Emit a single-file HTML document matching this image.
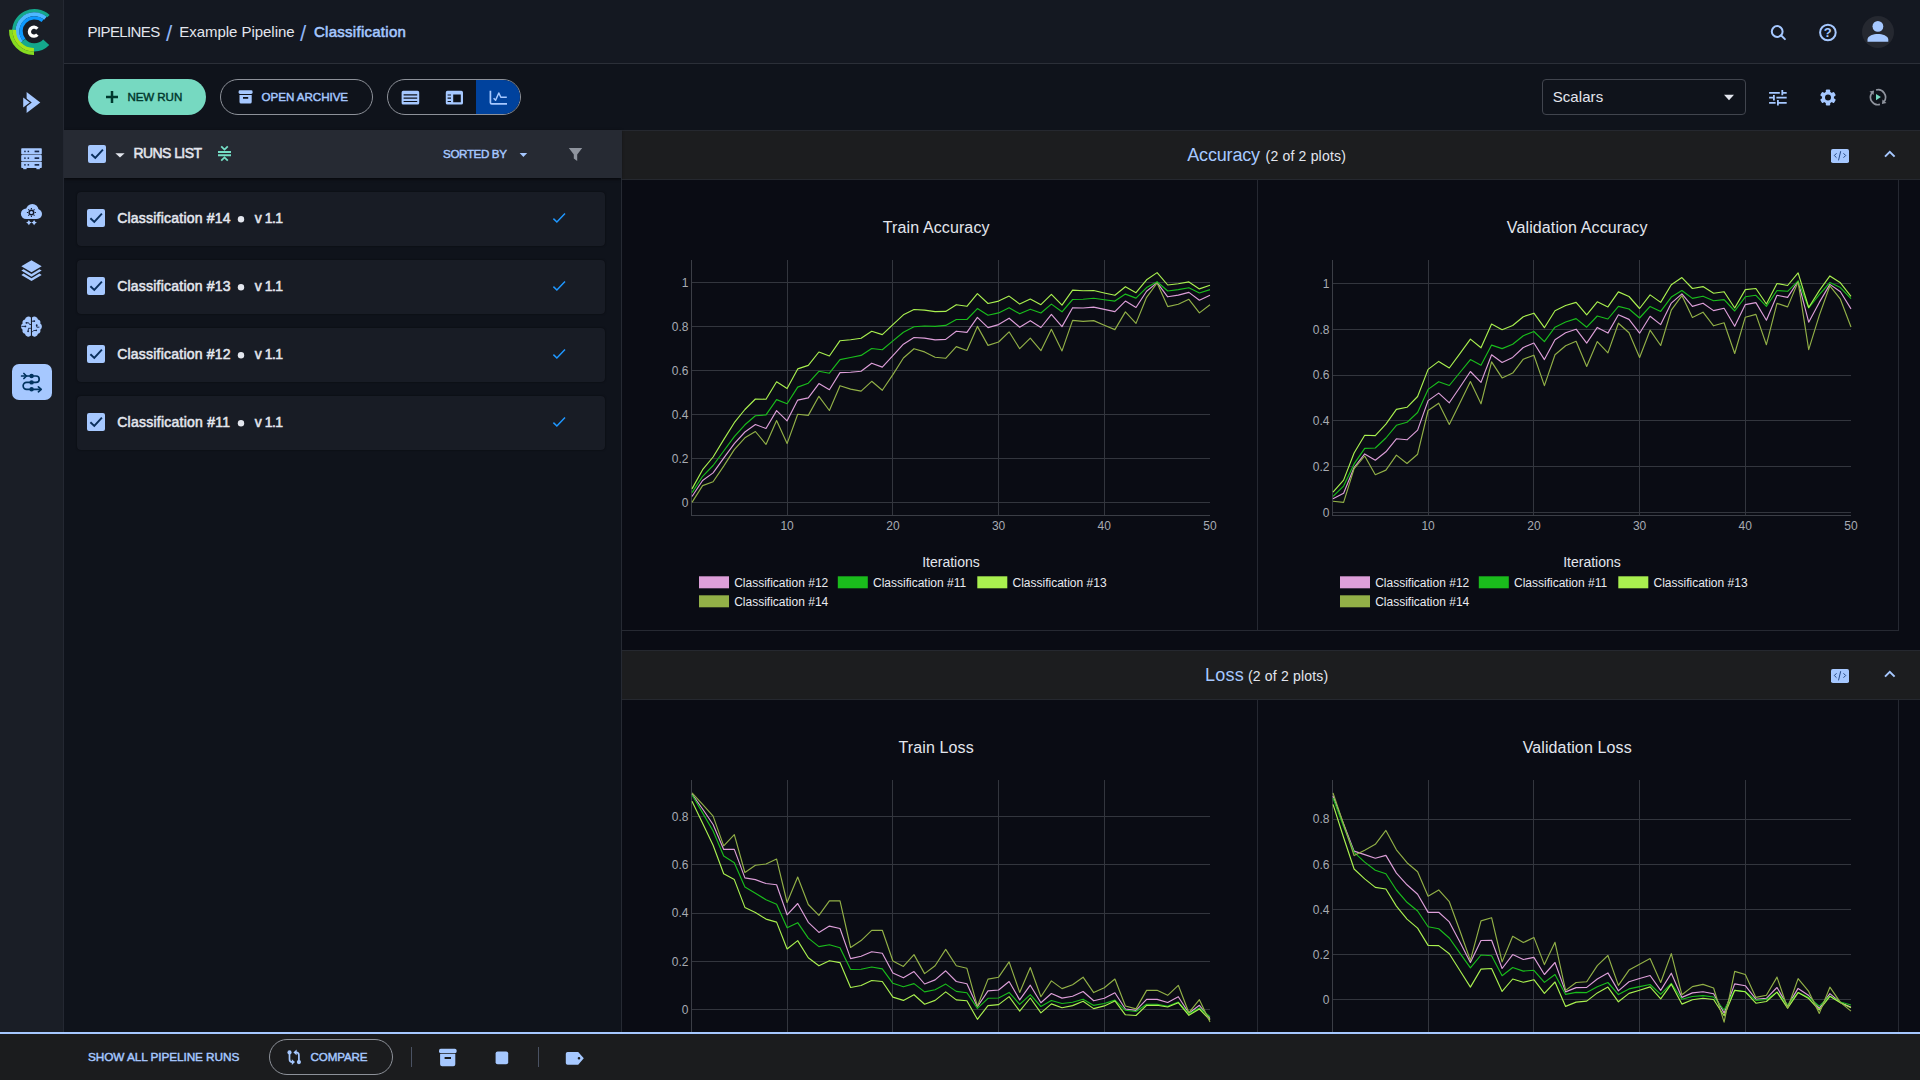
<!DOCTYPE html>
<html lang="en">
<head>
<meta charset="utf-8">
<title>Pipelines / Example Pipeline / Classification</title>
<style>
*{box-sizing:border-box;margin:0;padding:0}
html,body{width:1920px;height:1080px;overflow:hidden;background:#0f131b;color:#e3e6ee;font-family:"Liberation Sans",sans-serif;}
.t{position:absolute;white-space:pre;font-family:"Liberation Sans",sans-serif;}
.a{position:absolute}
#sidebar{position:absolute;left:0;top:0;width:64px;height:1032px;background:#1a1e26;border-right:1px solid #242832;}
#header{position:absolute;left:64px;top:0;width:1856px;height:64px;background:#141821;border-bottom:1px solid #2b2f38;}
#toolbar{position:absolute;left:64px;top:64px;width:1856px;height:66px;background:#0f131b;}
#listhead{position:absolute;left:64px;top:130px;width:557px;height:48px;background:#262a33;box-shadow:0 1px 3px rgba(0,0,0,.7);}
#list{position:absolute;left:64px;top:178px;width:557px;height:854px;background:#0f131b;}
#divider{position:absolute;left:621px;top:130px;width:1px;height:902px;background:#262a33;}
#right{position:absolute;left:622px;top:130px;width:1298px;height:902px;background:#0a0c14;overflow:hidden;}
#bottom{position:absolute;left:0;top:1032px;width:1920px;height:48px;background:#1b1c1e;border-top:2px solid #a6c8ff;}
.card{position:absolute;left:77px;width:528px;height:54px;background:#181c25;border-radius:4px;box-shadow:0 0 2px rgba(0,0,0,.6);}
.cb{position:absolute;width:18px;height:18px;background:#a6c8ff;border-radius:2px;}
.sechead{position:absolute;left:0;width:1298px;height:50px;background:#1c1d1f;border-top:1px solid #25282f;border-bottom:1px solid #25282f;}
.cell{position:absolute;border-right:1px solid #262932;border-bottom:1px solid #262932;}
.pill{position:absolute;height:36px;border-radius:18px;}
svg{position:absolute;overflow:visible}
svg text{font-family:"Liberation Sans",sans-serif}

</style>
</head>
<body>
<div id="header"></div>
<div id="toolbar"></div>
<div id="list"></div>
<div id="right">
  <div class="sechead" style="top:0"></div>
  <div class="cell" style="left:0;top:50px;width:636px;height:451px"></div>
  <div class="cell" style="left:636px;top:50px;width:641px;height:451px"></div>
  <div class="sechead" style="top:520px"></div>
  <div class="cell" style="left:0;top:570px;width:636px;height:451px"></div>
  <div class="cell" style="left:636px;top:570px;width:641px;height:451px"></div>
</div>
<div id="listhead"></div>
<div id="divider"></div>
<div class="card" style="top:192px"></div>
<div class="card" style="top:260px"></div>
<div class="card" style="top:328px"></div>
<div class="card" style="top:396px"></div>
<div id="sidebar"></div>
<div id="bottom"></div>
<!-- buttons -->
<div class="pill" style="left:88px;top:79px;width:118px;background:#76d9c1"></div>
<div class="pill" style="left:220px;top:79px;width:153px;border:1px solid #8d9199"></div>
<div class="pill" style="left:387px;top:79px;width:134px;border:1px solid #8d9199;overflow:hidden"><div class="a" style="left:88px;top:0;width:46px;height:36px;background:#00429d"></div></div>
<div class="a" style="left:1542px;top:79px;width:204px;height:36px;border:1px solid #41454e;border-radius:4px"></div>
<div class="pill" style="left:269px;top:1039px;width:124px;border:1px solid #8d9199"></div>
<div class="a" style="left:411px;top:1047px;width:1px;height:20px;background:#4a5263"></div>
<div class="a" style="left:538px;top:1047px;width:1px;height:20px;background:#4a5263"></div>
<div class="a" style="left:1862px;top:16px;width:32px;height:32px;border-radius:16px;background:#252830"></div>
<div class="a" style="left:12px;top:364px;width:40px;height:36px;border-radius:7px;background:#a6c8ff"></div>

<svg width="1920" height="1080" viewBox="0 0 1920 1080" style="left:0;top:0" fill="none">
<!-- logo -->
<g id="logo" fill="none" stroke-linecap="butt">
  <path d="M48.45 16.13 A20.6 20.6 0 0 0 13.88 33.00" stroke="#14a88c" stroke-width="3.4"/>
  <path d="M45.41 18.31 A16.95 16.95 0 0 0 21.61 42.32" stroke="#4db8ff" stroke-width="3.9"/>
  <path d="M42.65 20.64 A13.4 13.4 0 0 0 24.14 39.81" stroke="#0d99ff" stroke-width="3.3"/>
  <path d="M22.03 41.58 A16.15 16.15 0 0 0 46.21 42.21" stroke="#14a88c" stroke-width="8.3"/>
  <path d="M10.76 29.80 A22.85 22.85 0 0 0 34.00 53.25" stroke="#86dc20" stroke-width="3.5"/>
  <path d="M14.26 29.89 A19.35 19.35 0 0 0 33.94 49.75" stroke="#a4e41b" stroke-width="3.6"/>
  <path d="M37.35 28.81 A4.5 4.5 0 1 0 37.35 34.59" stroke="#ffffff" stroke-width="3.3"/>
</g>
<!-- sidebar icons -->
<g fill="#a6c8ff">
  <!-- 1 double arrow -->
  <path d="M26.6 92 L40.3 102.5 L26.6 113 Z" stroke="#1a1e26" stroke-width="0"/>
  <path d="M22.6 96.2 L30.8 102.5 L22.6 108.8 Z" stroke="#1a1e26" stroke-width="1.2"/>
  <!-- 2 server rack -->
  <rect x="21.2" y="148.2" width="20.6" height="6.2" rx="0.8"/>
  <rect x="21.2" y="155.0" width="20.6" height="6.2" rx="0.8" />
  <rect x="21.2" y="161.8" width="20.6" height="6.2" rx="0.8"/>
  <rect x="23.2" y="168" width="3.4" height="1.2"/><rect x="36.4" y="168" width="3.4" height="1.2"/>
  <g fill="#1a2a4a">
   <rect x="24.2" y="150.7" width="1.5" height="1.5"/><rect x="27.6" y="150.7" width="1.5" height="1.5"/><rect x="34.6" y="150.6" width="4.6" height="1.7"/>
   <rect x="24.2" y="157.4" width="1.5" height="1.5"/><rect x="27.6" y="157.4" width="1.5" height="1.5"/><rect x="34.6" y="157.3" width="4.6" height="1.7"/>
   <rect x="24.2" y="164.1" width="1.5" height="1.5"/><rect x="27.6" y="164.1" width="1.5" height="1.5"/><rect x="34.6" y="164.0" width="4.6" height="1.7"/>
  </g>
  <!-- 3 cloud gear -->
  <circle cx="26.1" cy="213.8" r="5.2"/><circle cx="32.3" cy="210.2" r="6.2"/><circle cx="37" cy="214" r="5"/><rect x="26" y="213" width="11" height="6"/>
  <circle cx="31.4" cy="212.5" r="2.3" fill="#a6c8ff" stroke="#10182a" stroke-width="1.4"/>
  <g stroke="#10182a" stroke-width="1.1"><path d="M31.4 208v1.2M31.4 215.8v1.2M26.9 212.5h1.2M34.7 212.5h1.2M28.3 209.4l.8.8M33.7 214.8l.8.8M34.5 209.4l-.8.8M29.1 214.8l-.8.8"/></g>
  <path d="M28.9 220 L30 221.7 L31.7 222.6 L30 223.5 L28.9 225.2 L27.8 223.5 L26.1 222.6 L27.8 221.7 Z"/>
  <path d="M34.1 220 L35.2 221.7 L36.9 222.6 L35.2 223.5 L34.1 225.2 L33 223.5 L31.3 222.6 L33 221.7 Z"/>
  <!-- 4 layers -->
  <path d="M31.5 260.3 L41.7 266.3 L31.5 272.3 L21.3 266.3 Z"/>
  <path d="M21.3 270.6 L23.6 269.2 L31.5 273.9 L39.4 269.2 L41.7 270.6 L31.5 276.7 Z"/>
  <path d="M21.3 275 L23.6 273.6 L31.5 278.3 L39.4 273.6 L41.7 275 L31.5 281.1 Z"/>
  <!-- 5 brain -->
  <path d="M30.9 317.6 A3.6 3.6 0 0 0 24.9 319.4 A3.3 3.3 0 0 0 22.6 323.4 A3.6 3.6 0 0 0 21.0 326.6 A3.6 3.6 0 0 0 22.6 329.8 A3.3 3.3 0 0 0 24.9 333.8 A3.6 3.6 0 0 0 30.9 335.6 Z"/>
  <path d="M32.0 317.6 A3.6 3.6 0 0 1 38.0 319.4 A3.3 3.3 0 0 1 40.3 323.4 A3.6 3.6 0 0 1 41.9 326.6 A3.6 3.6 0 0 1 40.3 329.8 A3.3 3.3 0 0 1 38.0 333.8 A3.6 3.6 0 0 1 32.0 335.6 Z"/>
  <g stroke="#15233f" stroke-width="0.9" fill="none"><path d="M26.6 322.8h2l1 1.7h1.6M21.4 326.4h4M30.9 328.3h-2.4l-.4 2.8M32 321.2h2M36.6 325.4l.2 1.8h2.6M32.2 332.2l1.4-1.7h2.6"/></g>
  <g fill="#15233f"><circle cx="26.4" cy="322.8" r="0.9"/><circle cx="25.4" cy="326.4" r="0.9"/><circle cx="28.1" cy="331.3" r="0.9"/><circle cx="34.3" cy="321.1" r="0.9"/><circle cx="36.7" cy="325.2" r="0.9"/><circle cx="36.3" cy="330.4" r="0.8"/></g>
</g>
<!-- 6 pipelines (active) -->
<g stroke="#00335f" stroke-width="1.7" fill="none" stroke-linecap="round" stroke-linejoin="round">
  <path d="M21.6 376 H36.0 A3.2 3.2 0 0 1 36.0 382.4 H26.6 A3.45 3.45 0 0 0 26.6 389.3 H40.6"/>
  <path d="M23.9 373.5 L26.4 376 L23.9 378.5"/>
  <path d="M38.4 386.8 L41.2 389.3 L38.4 391.8"/>
</g>
<g fill="#00335f"><circle cx="31.6" cy="376" r="2.2"/><circle cx="31.6" cy="382.4" r="2.2"/><circle cx="31.6" cy="389.3" r="2.2"/></g>

<!-- header right -->
<g stroke="#a6c8ff" stroke-width="2" fill="none">
  <circle cx="1777.2" cy="31.5" r="5.4"/>
  <path d="M1781.2 35.5 L1784.9 39.1" stroke-linecap="round"/>
  <circle cx="1827.9" cy="32.5" r="7.8"/>
</g>
<g fill="#a6c8ff">
  <circle cx="1877.9" cy="26.4" r="5.4"/>
  <path d="M1867.5 41.8 V39.6 C1867.5 35.6 1873.6 33.9 1877.9 33.9 C1882.2 33.9 1888.3 35.6 1888.3 39.6 V41.8 Z"/>
</g>
<!-- toolbar: plus -->
<path d="M112 91.1 V103.1 M106 97.1 H118" stroke="#00382d" stroke-width="2.5"/>
<!-- archive icon toolbar -->
<g fill="#a6c8ff">
  <rect x="238.6" y="90.3" width="14" height="3.6" rx="1.4"/>
  <path d="M239.5 94.9 H251.7 V102 A1.6 1.6 0 0 1 250.1 103.6 H241.1 A1.6 1.6 0 0 1 239.5 102 Z M243 97 V98.8 H248.2 V97 Z" fill-rule="evenodd"/>
</g>
<!-- view toggle icons -->
<g fill="#a6c8ff">
  <path fill-rule="evenodd" d="M403.2 90.8 H417.6 A1.6 1.6 0 0 1 419.2 92.4 V103 A1.6 1.6 0 0 1 417.6 104.6 H403.2 A1.6 1.6 0 0 1 401.6 103 V92.4 A1.6 1.6 0 0 1 403.2 90.8 Z M403.6 94.3 V95.5 H417.2 V94.3 Z M403.6 97.6 V98.8 H417.2 V97.6 Z M403.6 100.9 V102.1 H417.2 V100.9 Z"/>
  <path fill-rule="evenodd" d="M447.4 90.8 H461.4 A1.6 1.6 0 0 1 463 92.4 V103 A1.6 1.6 0 0 1 461.4 104.6 H447.4 A1.6 1.6 0 0 1 445.8 103 V92.4 A1.6 1.6 0 0 1 447.4 90.8 Z M453.2 94.4 V102.2 H460.8 V94.4 Z M447.6 94.4 V95.6 H451 V94.4 Z M447.6 97.6 V98.8 H451 V97.6 Z M447.6 100.9 V102.1 H451 V100.9 Z"/>
</g>
<g stroke="#a6c8ff" fill="none" stroke-width="1.7">
  <path d="M490.4 90.8 V102.4 A1.4 1.4 0 0 0 491.8 103.8 H507"/>
  <path d="M493.6 98.2 L495.6 100.2 L498.8 93 L500.8 97.2 H506.8" stroke-width="1.5" stroke-linejoin="round"/>
</g>
<!-- scalars arrow -->
<path d="M1724 94.8 H1734 L1729 100.2 Z" fill="#e3e6ee"/>
<!-- tune -->
<g stroke="#a6c8ff" stroke-width="1.8">
  <path d="M1769.1 92.8 H1779.8 M1782.2 92.8 H1786.7 M1769.1 97.7 H1773.9 M1776.4 97.7 H1786.7 M1769.1 102.8 H1775.6 M1777.9 102.8 H1786.7"/>
  <path d="M1782.3 89.9 V95.3 M1773.9 95.1 V100.4 M1777.9 100.1 V105.4"/>
</g>
<!-- gear -->
<g transform="translate(1828 97.5)">
  <g fill="#a6c8ff">
    <circle r="6.0"/>
    <rect x="-2.2" y="-7.9" width="4.4" height="15.8" rx="1"/>
    <rect x="-2.2" y="-7.9" width="4.4" height="15.8" rx="1" transform="rotate(60)"/>
    <rect x="-2.2" y="-7.9" width="4.4" height="15.8" rx="1" transform="rotate(120)"/>
  </g>
  <circle r="3.0" fill="#0f131b"/>
</g>
<!-- refresh/auto -->
<g stroke="#8f949e" stroke-width="1.7" fill="none">
  <path d="M1876.06 89.96 A7.5 7.5 0 0 1 1884.14 101.50"/>
  <path d="M1879.94 104.44 A7.5 7.5 0 0 1 1871.86 92.90"/>
</g>
<path d="M1881.95 104.02 L1886.48 103.02 L1882.47 99.41 Z" fill="#8f949e"/>
<path d="M1874.05 90.38 L1869.52 91.38 L1873.53 94.99 Z" fill="#8f949e"/>
<path d="M1876 94 L1880.9 97.1 L1876 100.2 Z" fill="#76d9c1"/>

<!-- list header -->
<rect x="88" y="145" width="18" height="18" rx="2" fill="#a6c8ff"/>
<path d="M91.4 154.2 L95.3 158.0 L102.9 149.6" stroke="#0a2f5c" stroke-width="1.9" fill="none"/>
<path d="M115.4 153.2 H124.6 L120 157.6 Z" fill="#e3e6ee"/>
<g stroke="#76dfc7" fill="none">
  <path d="M218 152 H231 M218 155.3 H231" stroke-width="2.1"/>
  <path d="M221.2 146.4 L224.5 149.6 L227.8 146.4 M221.2 160.6 L224.5 157.4 L227.8 160.6" stroke-width="1.8"/>
</g>
<path d="M519.6 152.9 H527.2 L523.4 157 Z" fill="#a6c8ff"/>
<path d="M568.8 147.9 H582.2 L577.2 154.6 V161 L573.8 158.6 V154.6 Z" fill="#8f949e"/>

<!-- card checkboxes / marks -->
<g id="cards">
  <g transform="translate(0 0)">
    <rect x="87" y="209" width="18" height="18" rx="2" fill="#a6c8ff"/>
    <path d="M90.4 218.2 L94.3 222.0 L101.9 213.6" stroke="#0a2f5c" stroke-width="1.9" fill="none"/>
    <circle cx="241" cy="219.2" r="3.2" fill="#e3e6ee"/>
    <path d="M553.4 218.6 L556.9 222.0 L565.0 213.6" stroke="#1f97ff" stroke-width="1.5" fill="none"/>
  </g>
  <g transform="translate(0 68)">
    <rect x="87" y="209" width="18" height="18" rx="2" fill="#a6c8ff"/>
    <path d="M90.4 218.2 L94.3 222.0 L101.9 213.6" stroke="#0a2f5c" stroke-width="1.9" fill="none"/>
    <circle cx="241" cy="219.2" r="3.2" fill="#e3e6ee"/>
    <path d="M553.4 218.6 L556.9 222.0 L565.0 213.6" stroke="#1f97ff" stroke-width="1.5" fill="none"/>
  </g>
  <g transform="translate(0 136)">
    <rect x="87" y="209" width="18" height="18" rx="2" fill="#a6c8ff"/>
    <path d="M90.4 218.2 L94.3 222.0 L101.9 213.6" stroke="#0a2f5c" stroke-width="1.9" fill="none"/>
    <circle cx="241" cy="219.2" r="3.2" fill="#e3e6ee"/>
    <path d="M553.4 218.6 L556.9 222.0 L565.0 213.6" stroke="#1f97ff" stroke-width="1.5" fill="none"/>
  </g>
  <g transform="translate(0 204)">
    <rect x="87" y="209" width="18" height="18" rx="2" fill="#a6c8ff"/>
    <path d="M90.4 218.2 L94.3 222.0 L101.9 213.6" stroke="#0a2f5c" stroke-width="1.9" fill="none"/>
    <circle cx="241" cy="219.2" r="3.2" fill="#e3e6ee"/>
    <path d="M553.4 218.6 L556.9 222.0 L565.0 213.6" stroke="#1f97ff" stroke-width="1.5" fill="none"/>
  </g>
</g>
<!-- section header icons -->
<g id="sec1">
  <rect x="1831" y="149" width="18" height="14" rx="1.8" fill="#a6c8ff"/>
  <path d="M1836.5 153.3 L1834.3 155.5 L1836.5 157.7 M1843.5 153.3 L1845.7 155.5 L1843.5 157.7 M1840.7 151.2 L1838.5 160.4" stroke="#1c3f7c" stroke-width="0.95" fill="none"/>
  <path d="M1885 156.6 L1889.8 151.8 L1894.6 156.6" stroke="#a6c8ff" stroke-width="2" fill="none"/>
</g>
<g id="sec2" transform="translate(0 520)">
  <rect x="1831" y="149" width="18" height="14" rx="1.8" fill="#a6c8ff"/>
  <path d="M1836.5 153.3 L1834.3 155.5 L1836.5 157.7 M1843.5 153.3 L1845.7 155.5 L1843.5 157.7 M1840.7 151.2 L1838.5 160.4" stroke="#1c3f7c" stroke-width="0.95" fill="none"/>
  <path d="M1885 156.6 L1889.8 151.8 L1894.6 156.6" stroke="#a6c8ff" stroke-width="2" fill="none"/>
</g>
<!-- bottom bar icons -->
<g stroke="#a6c8ff" stroke-width="1.7" fill="none">
  <path d="M289.5 1052.4 V1059.2 A2.9 2.9 0 0 0 292.4 1062.1 H293"/>
  <path d="M298.9 1062.1 V1055.3 A2.9 2.9 0 0 0 296 1052.4 H295.4"/>
</g>
<g fill="#a6c8ff">
  <circle cx="289.5" cy="1052.4" r="2.1"/><circle cx="298.9" cy="1062.1" r="2.1"/>
  <path d="M291.8 1059.3 L295 1062.1 L291.8 1064.9 Z"/>
  <path d="M296.6 1049.6 L293.4 1052.4 L296.6 1055.2 Z"/>
  <rect x="439" y="1048.8" width="17.6" height="4.4" rx="1.7"/>
  <path fill-rule="evenodd" d="M440.1 1054.1 H455.3 V1064.3 A2 2 0 0 1 453.3 1066.3 H442.1 A2 2 0 0 1 440.1 1064.3 Z M444.6 1056.9 V1059.1 H451 V1056.9 Z"/>
  <rect x="495.6" y="1051.4" width="12.6" height="12.8" rx="2"/>
  <path fill-rule="evenodd" d="M567.6 1051.9 H578.2 L583.8 1058.3 L578.2 1064.7 H567.6 A1.8 1.8 0 0 1 565.8 1062.9 V1053.7 A1.8 1.8 0 0 1 567.6 1051.9 Z M579 1057.0 A1.3 1.3 0 1 0 579 1059.6 A1.3 1.3 0 1 0 579 1057.0 Z"/>
</g>
</svg>
<div class="t" style="left:1823.7px;top:26px;font-size:13px;line-height:13px;font-weight:bold;color:#a6c8ff">?</div>

<svg width="1920" height="1032" viewBox="0 0 1920 1032" style="left:0;top:0;overflow:hidden" fill="none" shape-rendering="auto">
<g stroke="#33363e" stroke-width="1" shape-rendering="crispEdges">
<path d="M787.5 260 V515"/>
<path d="M892.5 260 V515"/>
<path d="M998.5 260 V515"/>
<path d="M1104.5 260 V515"/>
<path d="M692 502.5 H1210"/>
<path d="M692 458.5 H1210"/>
<path d="M692 414.5 H1210"/>
<path d="M692 370.5 H1210"/>
<path d="M692 326.5 H1210"/>
<path d="M692 282.5 H1210"/>
</g>
<g stroke="#3b3e46" stroke-width="1" shape-rendering="crispEdges"><path d="M691.5 260 V515.5"/><path d="M691 515.5 H1210"/></g>
<polyline points="692.0,496.5 702.6,480.5 713.1,472.9 723.7,458.2 734.3,443.6 744.9,432.0 755.4,424.5 766.0,428.5 776.6,410.6 787.1,420.8 797.7,400.1 808.3,397.9 818.9,383.6 829.4,389.7 840.0,372.6 850.6,372.2 861.1,371.3 871.7,363.2 882.3,367.1 892.9,355.6 903.4,344.2 914.0,337.5 924.6,338.1 935.1,339.9 945.7,339.4 956.3,331.2 966.9,332.4 977.4,317.4 988.0,327.6 998.6,324.6 1009.1,318.2 1019.7,327.2 1030.3,320.7 1040.9,327.5 1051.4,314.4 1062.0,326.6 1072.6,307.7 1083.1,308.0 1093.7,307.1 1104.3,309.4 1114.9,311.6 1125.4,301.1 1136.0,307.5 1146.6,291.3 1157.1,282.6 1167.7,296.8 1178.3,295.1 1188.9,292.4 1199.4,300.2 1210.0,295.2" stroke="#dd9fd9" stroke-width="1.15" stroke-linejoin="round" fill="none"/>
<polyline points="692.0,492.6 702.6,476.3 713.1,465.5 723.7,451.0 734.3,436.6 744.9,424.8 755.4,415.8 766.0,414.9 776.6,399.6 787.1,403.7 797.7,387.1 808.3,383.2 818.9,371.3 829.4,373.2 840.0,359.6 850.6,357.5 861.1,355.4 871.7,348.5 882.3,349.7 892.9,340.9 903.4,332.2 914.0,326.8 924.6,326.0 935.1,326.4 945.7,325.4 956.3,319.5 966.9,319.5 977.4,308.6 988.0,315.2 998.6,312.9 1009.1,307.7 1019.7,313.8 1030.3,309.2 1040.9,313.0 1051.4,304.1 1062.0,311.8 1072.6,299.5 1083.1,299.2 1093.7,298.3 1104.3,299.8 1114.9,301.1 1125.4,294.1 1136.0,298.1 1146.6,287.6 1157.1,281.7 1167.7,291.0 1178.3,289.6 1188.9,287.7 1199.4,293.0 1210.0,289.6" stroke="#1abc1c" stroke-width="1.15" stroke-linejoin="round" fill="none"/>
<polyline points="692.0,488.9 702.6,469.7 713.1,457.0 723.7,439.6 734.3,422.7 744.9,409.5 755.4,399.0 766.0,399.3 776.6,381.8 787.1,388.6 797.7,368.9 808.3,365.4 818.9,352.0 829.4,356.0 840.0,340.7 850.6,339.7 861.1,338.3 871.7,331.3 882.3,334.6 892.9,324.7 903.4,314.8 914.0,309.5 924.6,310.1 935.1,311.6 945.7,311.4 956.3,304.7 966.9,306.3 977.4,293.6 988.0,303.5 998.6,301.1 1009.1,296.1 1019.7,304.1 1030.3,299.0 1040.9,304.7 1051.4,294.4 1062.0,305.2 1072.6,290.1 1083.1,290.8 1093.7,290.5 1104.3,293.0 1114.9,295.3 1125.4,286.7 1136.0,292.7 1146.6,279.8 1157.1,272.6 1167.7,285.0 1178.3,283.8 1188.9,281.9 1199.4,288.9 1210.0,285.2" stroke="#a9f04f" stroke-width="1.15" stroke-linejoin="round" fill="none"/>
<polyline points="692.0,502.4 702.6,485.6 713.1,481.7 723.7,466.1 734.3,449.6 744.9,437.8 755.4,431.5 766.0,444.4 776.6,420.6 787.1,443.6 797.7,414.3 808.3,415.4 818.9,396.3 829.4,410.5 840.0,385.7 850.6,389.1 861.1,391.1 871.7,381.3 882.3,390.3 892.9,374.6 903.4,358.0 914.0,348.7 924.6,351.9 935.1,357.3 945.7,358.3 956.3,346.6 966.9,350.5 977.4,326.4 988.0,345.4 998.6,342.0 1009.1,331.8 1019.7,348.7 1030.3,338.2 1040.9,350.7 1051.4,329.3 1062.0,350.9 1072.6,320.4 1083.1,321.4 1093.7,320.6 1104.3,325.2 1114.9,329.6 1125.4,311.9 1136.0,323.4 1146.6,297.3 1157.1,283.0 1167.7,306.6 1178.3,304.3 1188.9,299.3 1199.4,312.9 1210.0,304.8" stroke="#92b047" stroke-width="1.15" stroke-linejoin="round" fill="none"/>
<g fill="#a7abb3" font-size="12">
<text x="688.4" y="506.8" text-anchor="end">0</text>
<text x="688.4" y="462.8" text-anchor="end">0.2</text>
<text x="688.4" y="418.8" text-anchor="end">0.4</text>
<text x="688.4" y="374.8" text-anchor="end">0.6</text>
<text x="688.4" y="330.8" text-anchor="end">0.8</text>
<text x="688.4" y="286.8" text-anchor="end">1</text>
<text x="787.1" y="530" text-anchor="middle">10</text>
<text x="892.9" y="530" text-anchor="middle">20</text>
<text x="998.6" y="530" text-anchor="middle">30</text>
<text x="1104.3" y="530" text-anchor="middle">40</text>
<text x="1210.0" y="530" text-anchor="middle">50</text>
</g>
<text x="936.2" y="233.3" text-anchor="middle" font-size="16" letter-spacing="0.12" fill="#e3e6ee">Train Accuracy</text>
<g stroke="#33363e" stroke-width="1" shape-rendering="crispEdges">
<path d="M1428.5 260 V515"/>
<path d="M1533.5 260 V515"/>
<path d="M1639.5 260 V515"/>
<path d="M1745.5 260 V515"/>
<path d="M1333 512.5 H1851"/>
<path d="M1333 466.5 H1851"/>
<path d="M1333 420.5 H1851"/>
<path d="M1333 375.5 H1851"/>
<path d="M1333 329.5 H1851"/>
<path d="M1333 283.5 H1851"/>
</g>
<g stroke="#3b3e46" stroke-width="1" shape-rendering="crispEdges"><path d="M1332.5 260 V515.5"/><path d="M1332 515.5 H1851"/></g>
<polyline points="1333.0,498.8 1343.6,493.3 1354.1,467.5 1364.7,453.9 1375.3,460.2 1385.9,451.8 1396.4,438.8 1407.0,439.8 1417.6,430.1 1428.1,400.6 1438.7,393.1 1449.3,402.8 1459.9,387.3 1470.4,371.5 1481.0,382.4 1491.6,354.8 1502.1,362.5 1512.7,357.4 1523.3,347.5 1533.9,343.0 1544.4,359.6 1555.0,339.7 1565.6,332.8 1576.1,329.2 1586.7,343.1 1597.3,327.4 1607.9,333.1 1618.4,314.8 1629.0,319.4 1639.6,333.2 1650.1,316.3 1660.7,324.6 1671.3,303.1 1681.9,293.9 1692.4,306.4 1703.0,303.2 1713.6,310.6 1724.1,308.3 1734.7,326.3 1745.3,304.6 1755.9,302.6 1766.4,320.2 1777.0,295.3 1787.6,297.4 1798.1,281.3 1808.7,322.2 1819.3,302.4 1829.9,284.4 1840.4,291.8 1851.0,308.9" stroke="#dd9fd9" stroke-width="1.15" stroke-linejoin="round" fill="none"/>
<polyline points="1333.0,496.4 1343.6,486.1 1354.1,463.9 1364.7,448.4 1375.3,448.0 1385.9,438.0 1396.4,425.3 1407.0,422.3 1417.6,412.5 1428.1,389.4 1438.7,381.7 1449.3,385.5 1459.9,372.5 1470.4,359.6 1481.0,365.2 1491.6,345.1 1502.1,348.6 1512.7,344.2 1523.3,335.7 1533.9,331.5 1544.4,341.6 1555.0,327.2 1565.6,322.0 1576.1,318.6 1586.7,327.2 1597.3,316.0 1607.9,319.0 1618.4,306.4 1629.0,309.0 1639.6,318.0 1650.1,306.4 1660.7,311.4 1671.3,297.1 1681.9,290.5 1692.4,298.4 1703.0,296.2 1713.6,300.8 1724.1,299.6 1734.7,311.0 1745.3,296.8 1755.9,295.3 1766.4,306.4 1777.0,290.5 1787.6,291.3 1798.1,280.8 1808.7,308.0 1819.3,294.6 1829.9,282.5 1840.4,287.6 1851.0,298.7" stroke="#1abc1c" stroke-width="1.15" stroke-linejoin="round" fill="none"/>
<polyline points="1333.0,492.1 1343.6,480.1 1354.1,453.0 1364.7,435.3 1375.3,435.6 1385.9,424.1 1396.4,409.4 1407.0,407.3 1417.6,396.5 1428.1,369.4 1438.7,361.4 1449.3,368.0 1459.9,353.6 1470.4,339.1 1481.0,347.8 1491.6,324.1 1502.1,329.7 1512.7,325.5 1523.3,316.7 1533.9,313.2 1544.4,327.7 1555.0,310.8 1565.6,305.5 1576.1,302.4 1586.7,314.8 1597.3,301.8 1607.9,306.9 1618.4,291.9 1629.0,296.5 1639.6,308.5 1650.1,294.9 1660.7,302.4 1671.3,284.8 1681.9,277.6 1692.4,288.5 1703.0,286.6 1713.6,293.2 1724.1,291.7 1734.7,308.0 1745.3,289.6 1755.9,288.5 1766.4,304.0 1777.0,283.5 1787.6,285.5 1798.1,272.9 1808.7,307.5 1819.3,290.6 1829.9,275.9 1840.4,282.8 1851.0,296.4" stroke="#a9f04f" stroke-width="1.15" stroke-linejoin="round" fill="none"/>
<polyline points="1333.0,501.2 1343.6,502.4 1354.1,468.7 1364.7,456.0 1375.3,474.7 1385.9,470.1 1396.4,455.1 1407.0,463.5 1417.6,454.2 1428.1,410.5 1438.7,403.2 1449.3,424.5 1459.9,402.9 1470.4,381.5 1481.0,403.8 1491.6,361.9 1502.1,377.9 1512.7,373.1 1523.3,359.2 1533.9,355.2 1544.4,385.6 1555.0,354.7 1565.6,345.7 1576.1,341.3 1586.7,366.5 1597.3,341.6 1607.9,352.9 1618.4,323.2 1629.0,332.8 1639.6,357.5 1650.1,330.2 1660.7,345.5 1671.3,310.1 1681.9,295.6 1692.4,317.4 1703.0,312.2 1713.6,325.8 1724.1,322.8 1734.7,353.5 1745.3,317.2 1755.9,314.4 1766.4,344.7 1777.0,303.4 1787.6,306.9 1798.1,281.9 1808.7,349.7 1819.3,315.4 1829.9,285.8 1840.4,299.2 1851.0,327.0" stroke="#92b047" stroke-width="1.15" stroke-linejoin="round" fill="none"/>
<g fill="#a7abb3" font-size="12">
<text x="1329.4" y="516.7" text-anchor="end">0</text>
<text x="1329.4" y="470.9" text-anchor="end">0.2</text>
<text x="1329.4" y="425.1" text-anchor="end">0.4</text>
<text x="1329.4" y="379.3" text-anchor="end">0.6</text>
<text x="1329.4" y="333.5" text-anchor="end">0.8</text>
<text x="1329.4" y="287.7" text-anchor="end">1</text>
<text x="1428.1" y="530" text-anchor="middle">10</text>
<text x="1533.9" y="530" text-anchor="middle">20</text>
<text x="1639.6" y="530" text-anchor="middle">30</text>
<text x="1745.3" y="530" text-anchor="middle">40</text>
<text x="1851.0" y="530" text-anchor="middle">50</text>
</g>
<text x="1577.2" y="233.3" text-anchor="middle" font-size="16" letter-spacing="0.12" fill="#e3e6ee">Validation Accuracy</text>
<g stroke="#33363e" stroke-width="1" shape-rendering="crispEdges">
<path d="M787.5 780 V1035"/>
<path d="M892.5 780 V1035"/>
<path d="M998.5 780 V1035"/>
<path d="M1104.5 780 V1035"/>
<path d="M692 1009.5 H1210"/>
<path d="M692 961.5 H1210"/>
<path d="M692 913.5 H1210"/>
<path d="M692 864.5 H1210"/>
<path d="M692 816.5 H1210"/>
</g>
<g stroke="#3b3e46" stroke-width="1" shape-rendering="crispEdges"><path d="M691.5 780 V1035.5"/><path d="M691 1035.5 H1210"/></g>
<polyline points="692.0,794.1 702.6,809.0 713.1,824.5 723.7,849.4 734.3,849.4 744.9,877.9 755.4,879.6 766.0,883.5 776.6,884.8 787.1,914.8 797.7,903.5 808.3,922.3 818.9,932.4 829.4,926.1 840.0,928.5 850.6,958.6 861.1,956.2 871.7,951.8 882.3,953.2 892.9,973.1 903.4,977.8 914.0,971.6 924.6,984.0 935.1,979.9 945.7,970.8 956.3,981.5 966.9,983.7 977.4,1006.7 988.0,990.9 998.6,990.0 1009.1,981.5 1019.7,999.9 1030.3,985.2 1040.9,1002.8 1051.4,993.5 1062.0,998.1 1072.6,996.2 1083.1,991.5 1093.7,1000.8 1104.3,998.2 1114.9,992.8 1125.4,1009.0 1136.0,1010.4 1146.6,999.4 1157.1,999.4 1167.7,1002.5 1178.3,996.7 1188.9,1013.3 1199.4,1005.3 1210.0,1018.7" stroke="#dd9fd9" stroke-width="1.15" stroke-linejoin="round" fill="none"/>
<polyline points="692.0,794.7 702.6,812.9 713.1,831.0 723.7,856.0 734.3,862.7 744.9,887.0 755.4,893.2 766.0,899.7 776.6,904.2 787.1,927.7 797.7,922.7 808.3,938.1 818.9,946.6 829.4,944.8 840.0,947.8 850.6,969.5 861.1,969.2 871.7,967.0 882.3,968.9 892.9,983.3 903.4,986.8 914.0,983.6 924.6,991.9 935.1,989.7 945.7,984.1 956.3,991.4 966.9,992.8 977.4,1008.4 988.0,998.3 998.6,998.0 1009.1,992.4 1019.7,1004.4 1030.3,994.6 1040.9,1006.5 1051.4,1000.5 1062.0,1003.5 1072.6,1002.2 1083.1,999.2 1093.7,1005.4 1104.3,1003.5 1114.9,1000.1 1125.4,1010.3 1136.0,1011.5 1146.6,1004.2 1157.1,1004.2 1167.7,1006.3 1178.3,1002.1 1188.9,1013.9 1199.4,1007.9 1210.0,1016.7" stroke="#1abc1c" stroke-width="1.15" stroke-linejoin="round" fill="none"/>
<polyline points="692.0,801.2 702.6,823.2 713.1,845.2 723.7,873.8 734.3,879.6 744.9,907.4 755.4,912.6 766.0,919.1 776.6,922.1 787.1,949.0 797.7,940.6 808.3,957.8 818.9,965.8 829.4,960.7 840.0,962.6 850.6,987.5 861.1,985.5 871.7,980.5 882.3,981.5 892.9,997.1 903.4,1000.4 914.0,994.7 924.6,1004.2 935.1,1000.4 945.7,991.9 956.3,999.9 966.9,1000.7 977.4,1019.3 988.0,1005.6 998.6,1004.6 1009.1,996.6 1019.7,1011.2 1030.3,998.0 1040.9,1012.9 1051.4,1003.9 1062.0,1007.7 1072.6,1005.6 1083.1,1001.2 1093.7,1008.6 1104.3,1005.9 1114.9,1000.9 1125.4,1014.8 1136.0,1015.5 1146.6,1005.3 1157.1,1005.3 1167.7,1007.0 1178.3,1002.7 1188.9,1015.3 1199.4,1009.0 1210.0,1020.0" stroke="#a9f04f" stroke-width="1.15" stroke-linejoin="round" fill="none"/>
<polyline points="692.0,792.8 702.6,804.4 713.1,816.1 723.7,845.9 734.3,834.6 744.9,872.5 755.4,865.3 766.0,864.0 776.6,859.1 787.1,902.5 797.7,877.0 808.3,904.5 818.9,915.3 829.4,900.8 840.0,900.8 850.6,947.5 861.1,940.6 871.7,930.3 882.3,930.3 892.9,961.0 903.4,966.4 914.0,954.6 924.6,973.6 935.1,965.7 945.7,949.4 956.3,965.7 966.9,968.3 977.4,1006.3 988.0,979.1 998.6,977.2 1009.1,961.9 1019.7,992.4 1030.3,967.5 1040.9,996.7 1051.4,980.9 1062.0,988.6 1072.6,984.7 1083.1,977.2 1093.7,992.6 1104.3,987.7 1114.9,979.0 1125.4,1006.0 1136.0,1008.9 1146.6,990.4 1157.1,990.3 1167.7,995.3 1178.3,985.3 1188.9,1012.7 1199.4,999.7 1210.0,1022.0" stroke="#92b047" stroke-width="1.15" stroke-linejoin="round" fill="none"/>
<g fill="#a7abb3" font-size="12">
<text x="688.4" y="1013.8" text-anchor="end">0</text>
<text x="688.4" y="965.6" text-anchor="end">0.2</text>
<text x="688.4" y="917.4" text-anchor="end">0.4</text>
<text x="688.4" y="869.2" text-anchor="end">0.6</text>
<text x="688.4" y="821.0" text-anchor="end">0.8</text>
<text x="787.1" y="1050" text-anchor="middle">10</text>
<text x="892.9" y="1050" text-anchor="middle">20</text>
<text x="998.6" y="1050" text-anchor="middle">30</text>
<text x="1104.3" y="1050" text-anchor="middle">40</text>
<text x="1210.0" y="1050" text-anchor="middle">50</text>
</g>
<text x="936.2" y="753.3" text-anchor="middle" font-size="16" letter-spacing="0.12" fill="#e3e6ee">Train Loss</text>
<g stroke="#33363e" stroke-width="1" shape-rendering="crispEdges">
<path d="M1428.5 780 V1035"/>
<path d="M1533.5 780 V1035"/>
<path d="M1639.5 780 V1035"/>
<path d="M1745.5 780 V1035"/>
<path d="M1333 999.5 H1851"/>
<path d="M1333 954.5 H1851"/>
<path d="M1333 909.5 H1851"/>
<path d="M1333 864.5 H1851"/>
<path d="M1333 819.5 H1851"/>
</g>
<g stroke="#3b3e46" stroke-width="1" shape-rendering="crispEdges"><path d="M1332.5 780 V1035.5"/><path d="M1332 1035.5 H1851"/></g>
<polyline points="1333.0,796.0 1343.6,823.9 1354.1,851.1 1364.7,854.6 1375.3,858.2 1385.9,855.4 1396.4,873.1 1407.0,884.8 1417.6,894.2 1428.1,912.4 1438.7,912.3 1449.3,921.9 1459.9,942.0 1470.4,962.5 1481.0,940.5 1491.6,940.2 1502.1,968.5 1512.7,954.6 1523.3,959.5 1533.9,957.4 1544.4,974.5 1555.0,962.5 1565.6,991.9 1576.1,987.6 1586.7,987.4 1597.3,979.0 1607.9,972.9 1618.4,990.9 1629.0,981.8 1639.6,978.5 1650.1,975.5 1660.7,990.4 1671.3,973.2 1681.9,997.4 1692.4,992.9 1703.0,991.8 1713.6,993.8 1724.1,1013.1 1734.7,983.9 1745.3,985.7 1755.9,999.2 1766.4,998.3 1777.0,987.5 1787.6,1005.9 1798.1,988.4 1808.7,995.5 1819.3,1008.4 1829.9,993.6 1840.4,1002.4 1851.0,1007.3" stroke="#dd9fd9" stroke-width="1.15" stroke-linejoin="round" fill="none"/>
<polyline points="1333.0,798.0 1343.6,826.5 1354.1,852.4 1364.7,862.1 1375.3,870.2 1385.9,873.8 1396.4,890.0 1407.0,902.3 1417.6,911.0 1428.1,926.7 1438.7,928.8 1449.3,938.0 1459.9,953.1 1470.4,967.9 1481.0,955.0 1491.6,955.8 1502.1,975.7 1512.7,967.5 1523.3,971.1 1533.9,970.3 1544.4,982.4 1555.0,974.5 1565.6,994.4 1576.1,992.4 1586.7,992.6 1597.3,986.7 1607.9,982.5 1618.4,994.6 1629.0,988.9 1639.6,986.6 1650.1,984.5 1660.7,994.4 1671.3,983.3 1681.9,999.2 1692.4,996.5 1703.0,995.6 1713.6,997.0 1724.1,1010.0 1734.7,990.2 1745.3,991.6 1755.9,1000.4 1766.4,999.5 1777.0,992.1 1787.6,1004.9 1798.1,992.5 1808.7,997.4 1819.3,1006.2 1829.9,995.9 1840.4,1002.0 1851.0,1005.0" stroke="#1abc1c" stroke-width="1.15" stroke-linejoin="round" fill="none"/>
<polyline points="1333.0,804.4 1343.6,837.5 1354.1,869.0 1364.7,878.9 1375.3,887.4 1385.9,889.0 1396.4,906.1 1407.0,919.1 1417.6,928.1 1428.1,945.4 1438.7,945.6 1449.3,953.8 1459.9,970.5 1470.4,987.1 1481.0,969.1 1491.6,968.5 1502.1,991.4 1512.7,979.0 1523.3,982.3 1533.9,979.7 1544.4,993.3 1555.0,982.0 1565.6,1006.4 1576.1,1002.1 1586.7,1001.1 1597.3,992.9 1607.9,987.1 1618.4,1001.8 1629.0,993.4 1639.6,990.2 1650.1,986.9 1660.7,998.8 1671.3,984.2 1681.9,1004.1 1692.4,999.7 1703.0,998.3 1713.6,999.5 1724.1,1015.8 1734.7,990.4 1745.3,991.8 1755.9,1003.2 1766.4,1001.5 1777.0,992.1 1787.6,1008.1 1798.1,992.6 1808.7,998.6 1819.3,1010.0 1829.9,996.3 1840.4,1002.8 1851.0,1007.7" stroke="#a9f04f" stroke-width="1.15" stroke-linejoin="round" fill="none"/>
<polyline points="1333.0,793.0 1343.6,824.3 1354.1,855.6 1364.7,850.2 1375.3,844.3 1385.9,830.4 1396.4,849.8 1407.0,862.7 1417.6,871.8 1428.1,896.3 1438.7,889.9 1449.3,901.7 1459.9,930.8 1470.4,960.4 1481.0,920.9 1491.6,917.7 1502.1,961.9 1512.7,936.3 1523.3,942.6 1533.9,937.4 1544.4,964.6 1555.0,942.3 1565.6,990.4 1576.1,982.5 1586.7,981.7 1597.3,965.6 1607.9,955.5 1618.4,985.4 1629.0,970.1 1639.6,964.2 1650.1,958.5 1660.7,982.5 1671.3,953.6 1681.9,994.7 1692.4,986.6 1703.0,984.4 1713.6,988.0 1724.1,1022.1 1734.7,971.4 1745.3,974.5 1755.9,997.4 1766.4,995.2 1777.0,977.1 1787.6,1008.3 1798.1,978.6 1808.7,991.4 1819.3,1013.4 1829.9,987.2 1840.4,1002.4 1851.0,1011.1" stroke="#92b047" stroke-width="1.15" stroke-linejoin="round" fill="none"/>
<g fill="#a7abb3" font-size="12">
<text x="1329.4" y="1003.6" text-anchor="end">0</text>
<text x="1329.4" y="958.6" text-anchor="end">0.2</text>
<text x="1329.4" y="913.5" text-anchor="end">0.4</text>
<text x="1329.4" y="868.5" text-anchor="end">0.6</text>
<text x="1329.4" y="823.4" text-anchor="end">0.8</text>
<text x="1428.1" y="1050" text-anchor="middle">10</text>
<text x="1533.9" y="1050" text-anchor="middle">20</text>
<text x="1639.6" y="1050" text-anchor="middle">30</text>
<text x="1745.3" y="1050" text-anchor="middle">40</text>
<text x="1851.0" y="1050" text-anchor="middle">50</text>
</g>
<text x="1577.2" y="753.3" text-anchor="middle" font-size="16" letter-spacing="0.12" fill="#e3e6ee">Validation Loss</text>
<text x="951" y="566.8" text-anchor="middle" font-size="14" fill="#e3e6ee">Iterations</text>
<rect x="699" y="576.3" width="30" height="12" fill="#dd9fd9"/>
<text x="734.2" y="586.5" font-size="12" fill="#e8eaf0">Classification #12</text>
<rect x="837.8" y="576.3" width="30" height="12" fill="#1abc1c"/>
<text x="873.0" y="586.5" font-size="12" fill="#e8eaf0">Classification #11</text>
<rect x="977.3" y="576.3" width="30" height="12" fill="#a9f04f"/>
<text x="1012.5" y="586.5" font-size="12" fill="#e8eaf0">Classification #13</text>
<rect x="699" y="595.3" width="30" height="12" fill="#92b047"/>
<text x="734.2" y="605.5" font-size="12" fill="#e8eaf0">Classification #14</text>
<text x="1592" y="566.8" text-anchor="middle" font-size="14" fill="#e3e6ee">Iterations</text>
<rect x="1340" y="576.3" width="30" height="12" fill="#dd9fd9"/>
<text x="1375.2" y="586.5" font-size="12" fill="#e8eaf0">Classification #12</text>
<rect x="1478.8" y="576.3" width="30" height="12" fill="#1abc1c"/>
<text x="1514.0" y="586.5" font-size="12" fill="#e8eaf0">Classification #11</text>
<rect x="1618.3" y="576.3" width="30" height="12" fill="#a9f04f"/>
<text x="1653.5" y="586.5" font-size="12" fill="#e8eaf0">Classification #13</text>
<rect x="1340" y="595.3" width="30" height="12" fill="#92b047"/>
<text x="1375.2" y="605.5" font-size="12" fill="#e8eaf0">Classification #14</text>
</svg>
<div id="texts">
<div class="t" style="left:87.50px;top:24px;font-size:15px;line-height:15px;font-weight:normal;color:#e3e6ee;letter-spacing:-0.600px">PIPELINES</div>
<div class="t" style="left:166.00px;top:23px;font-size:22.5px;line-height:22.5px;font-weight:normal;color:#8fb4f5;letter-spacing:0.000px">/</div>
<div class="t" style="left:179.20px;top:24px;font-size:15px;line-height:15px;font-weight:normal;color:#e3e6ee;letter-spacing:-0.033px">Example Pipeline</div>
<div class="t" style="left:300.00px;top:23px;font-size:22.5px;line-height:22.5px;font-weight:normal;color:#8fb4f5;letter-spacing:0.000px">/</div>
<div class="t" style="left:314.00px;top:24px;font-size:15px;line-height:15px;font-weight:normal;color:#a6c8ff;-webkit-text-stroke:0.57px #a6c8ff;letter-spacing:0.269px">Classification</div>
<div class="t" style="left:127.40px;top:91px;font-size:11.6px;line-height:11.6px;font-weight:normal;color:#00382d;-webkit-text-stroke:0.44px #00382d;letter-spacing:-0.083px">NEW RUN</div>
<div class="t" style="left:261.50px;top:91px;font-size:11.6px;line-height:11.6px;font-weight:normal;color:#a6c8ff;-webkit-text-stroke:0.44px #a6c8ff;letter-spacing:-0.036px">OPEN ARCHIVE</div>
<div class="t" style="left:1552.70px;top:89px;font-size:15px;line-height:15px;font-weight:normal;color:#e3e6ee;letter-spacing:0.083px">Scalars</div>
<div class="t" style="left:133.40px;top:146px;font-size:14px;line-height:14px;font-weight:normal;color:#e3e6ee;-webkit-text-stroke:0.53px #e3e6ee;letter-spacing:-0.562px">RUNS LIST</div>
<div class="t" style="left:443.10px;top:148px;font-size:11.6px;line-height:11.6px;font-weight:normal;color:#a6c8ff;-webkit-text-stroke:0.44px #a6c8ff;letter-spacing:-0.375px">SORTED BY</div>
<div class="t" style="left:117.20px;top:211px;font-size:14px;line-height:14px;font-weight:normal;color:#e3e6ee;-webkit-text-stroke:0.53px #e3e6ee;letter-spacing:0.218px">Classification #14</div>
<div class="t" style="left:254.80px;top:211px;font-size:14px;line-height:14px;font-weight:normal;color:#e3e6ee;-webkit-text-stroke:0.53px #e3e6ee;letter-spacing:-0.525px">v 1.1</div>
<div class="t" style="left:117.20px;top:279px;font-size:14px;line-height:14px;font-weight:normal;color:#e3e6ee;-webkit-text-stroke:0.53px #e3e6ee;letter-spacing:0.218px">Classification #13</div>
<div class="t" style="left:254.80px;top:279px;font-size:14px;line-height:14px;font-weight:normal;color:#e3e6ee;-webkit-text-stroke:0.53px #e3e6ee;letter-spacing:-0.525px">v 1.1</div>
<div class="t" style="left:117.20px;top:347px;font-size:14px;line-height:14px;font-weight:normal;color:#e3e6ee;-webkit-text-stroke:0.53px #e3e6ee;letter-spacing:0.218px">Classification #12</div>
<div class="t" style="left:254.80px;top:347px;font-size:14px;line-height:14px;font-weight:normal;color:#e3e6ee;-webkit-text-stroke:0.53px #e3e6ee;letter-spacing:-0.525px">v 1.1</div>
<div class="t" style="left:117.20px;top:415px;font-size:14px;line-height:14px;font-weight:normal;color:#e3e6ee;-webkit-text-stroke:0.53px #e3e6ee;letter-spacing:0.241px">Classification #11</div>
<div class="t" style="left:254.80px;top:415px;font-size:14px;line-height:14px;font-weight:normal;color:#e3e6ee;-webkit-text-stroke:0.53px #e3e6ee;letter-spacing:-0.525px">v 1.1</div>
<div class="t" style="left:1187.20px;top:146px;font-size:18px;line-height:18px;font-weight:normal;color:#a6c8ff;letter-spacing:-0.157px">Accuracy</div>
<div class="t" style="left:1265.60px;top:149px;font-size:14px;line-height:14px;font-weight:normal;color:#e3e6ee;letter-spacing:0.185px">(2 of 2 plots)</div>
<div class="t" style="left:1204.90px;top:666px;font-size:18px;line-height:18px;font-weight:normal;color:#a6c8ff;letter-spacing:0.267px">Loss</div>
<div class="t" style="left:1247.90px;top:669px;font-size:14px;line-height:14px;font-weight:normal;color:#e3e6ee;letter-spacing:0.185px">(2 of 2 plots)</div>
<div class="t" style="left:88.00px;top:1052px;font-size:11.8px;line-height:11.8px;font-weight:normal;color:#a6c8ff;-webkit-text-stroke:0.45px #a6c8ff;letter-spacing:-0.081px">SHOW ALL PIPELINE RUNS</div>
<div class="t" style="left:310.60px;top:1051px;font-size:11.6px;line-height:11.6px;font-weight:normal;color:#a6c8ff;-webkit-text-stroke:0.44px #a6c8ff;letter-spacing:-0.150px">COMPARE</div>
</div>

</body>
</html>
